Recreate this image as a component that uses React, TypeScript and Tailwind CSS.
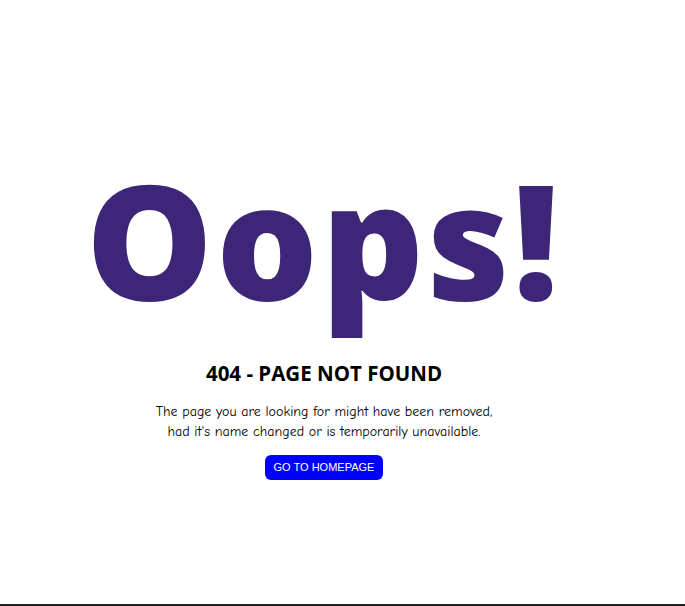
export default function App() {
	return (
		<div className="h-[606px] w-full bg-white border-b-2 border-[#222] flex">
			<div className="w-[648px] flex flex-col items-center pt-[138px]">
				<h1 className="font-['Open_Sans',sans-serif] font-extrabold text-[160px] leading-[200px] text-[#3d2577] tracking-[3px]">
					Oops!
				</h1>
				<h2 className="mt-[21px] font-['Open_Sans',sans-serif] font-bold text-[20.5px] leading-[28px] text-black">
					404 - PAGE NOT FOUND
				</h2>
				<p className="mt-[15px] text-center font-['Comic_Sans_MS','Comic_Neue',cursive] text-[14px] leading-[20px] text-black">
					The page you are looking for might have been removed,
					<br />
					had it's name changed or is temporarily unavailable.
				</p>
				<a
					href="#"
					className="mt-[13px] w-[118px] h-[25px] flex items-center justify-center rounded-[6px] bg-[#0000ff] text-white text-[11px] font-['Liberation_Sans',Arial,sans-serif]"
				>
					GO TO HOMEPAGE
				</a>
			</div>
		</div>
	);
}
